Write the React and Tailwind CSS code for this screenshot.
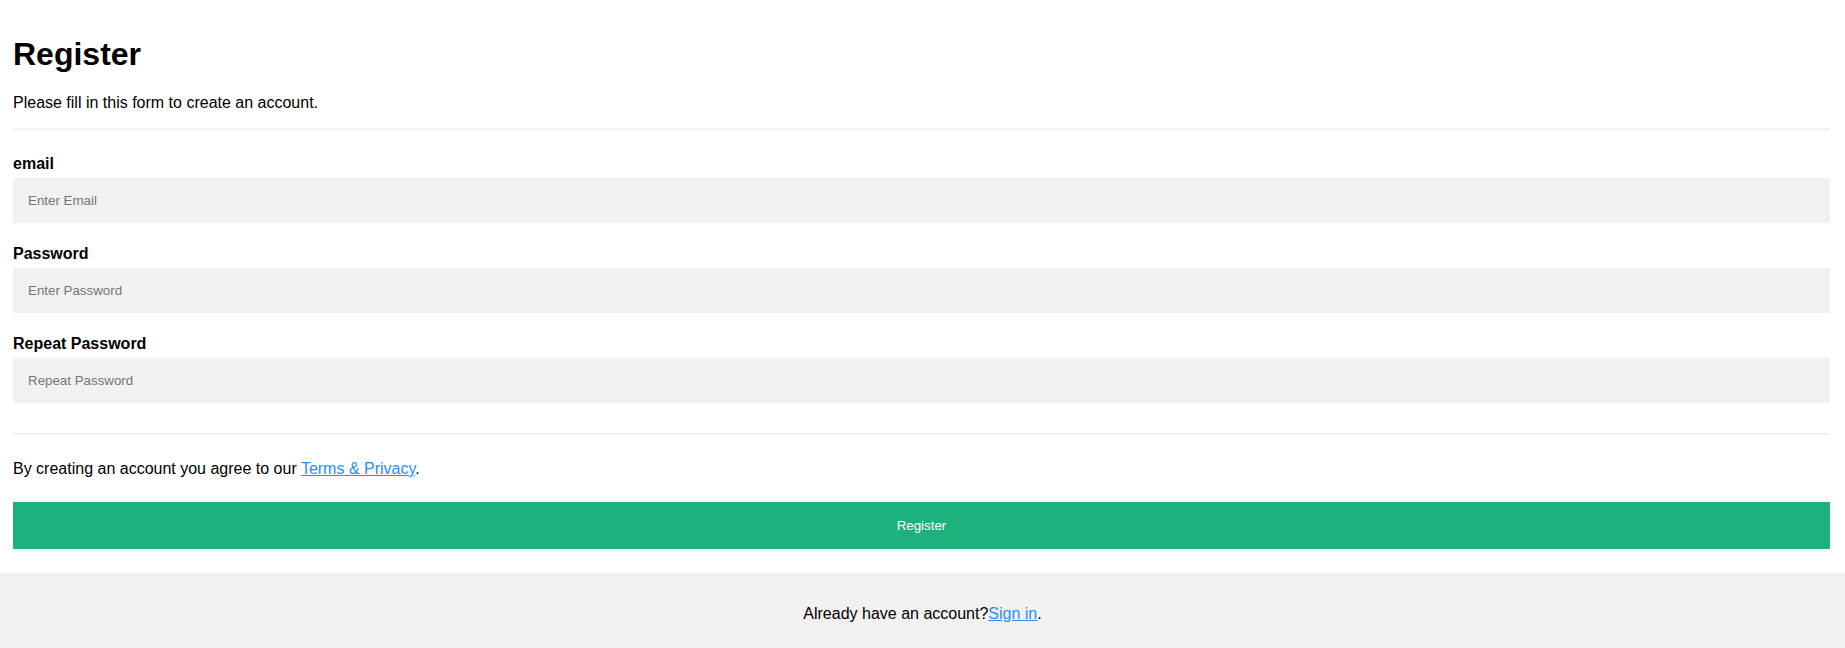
export default function App() {
  const font = { fontFamily: '"Liberation Sans", Arial, sans-serif' };
  return (
    <div className="bg-white text-black min-h-[648px] font-['Liberation_Sans',Arial,sans-serif]">
      <form className="flex flex-col pt-[15px] pl-[13px] pr-[15px] pb-4">
        <h1 className="text-[32px] font-bold leading-[37px] mt-[21px] mb-[21px]">Register</h1>
        <p className="text-base leading-[18px]">Please fill in this form to create an account.</p>
        <hr className="mt-4 mb-[25px] border-0 h-[2px] bg-[#f1f1f1]" />

        <label htmlFor="email" className="block text-base font-bold leading-[18px]">email</label>
        <input
          type="text"
          id="email"
          placeholder="Enter Email"
          className="block w-full mt-[5px] mb-[22px] h-[45px] px-[15px] bg-[#f1f1f1] border-0 outline-none text-[13.33px] placeholder:text-[#757575]"
        />

        <label htmlFor="psw" className="block text-base font-bold leading-[18px]">Password</label>
        <input
          type="password"
          id="psw"
          placeholder="Enter Password"
          className="block w-full mt-[5px] mb-[22px] h-[45px] px-[15px] bg-[#f1f1f1] border-0 outline-none text-[13.33px] placeholder:text-[#757575]"
        />

        <label htmlFor="psw-repeat" className="block text-base font-bold leading-[18px]">Repeat Password</label>
        <input
          type="password"
          id="psw-repeat"
          placeholder="Repeat Password"
          className="block w-full mt-[5px] mb-[22px] h-[45px] px-[15px] bg-[#f1f1f1] border-0 outline-none text-[13.33px] placeholder:text-[#757575]"
        />

        <hr className="mt-2 mb-[25px] border-0 h-[2px] bg-[#f1f1f1]" />

        <p className="text-base leading-[18px]">
          By creating an account you agree to our{" "}
          <a href="#" className="text-[#1e90ff] underline">Terms &amp; Privacy</a>.
        </p>

        <button
          type="button"
          className="mt-6 mb-2 h-[47px] w-full bg-[#1db27b] text-white text-[13.33px] border-0"
          style={font}
        >
          Register
        </button>
      </form>

      <div className="bg-[#f1f1f1] text-center p-4">
        <p className="my-4 text-base leading-[18px]">
          Already have an account?<a href="#" className="text-[#1e90ff] underline">Sign in</a>.
        </p>
      </div>
    </div>
  );
}
